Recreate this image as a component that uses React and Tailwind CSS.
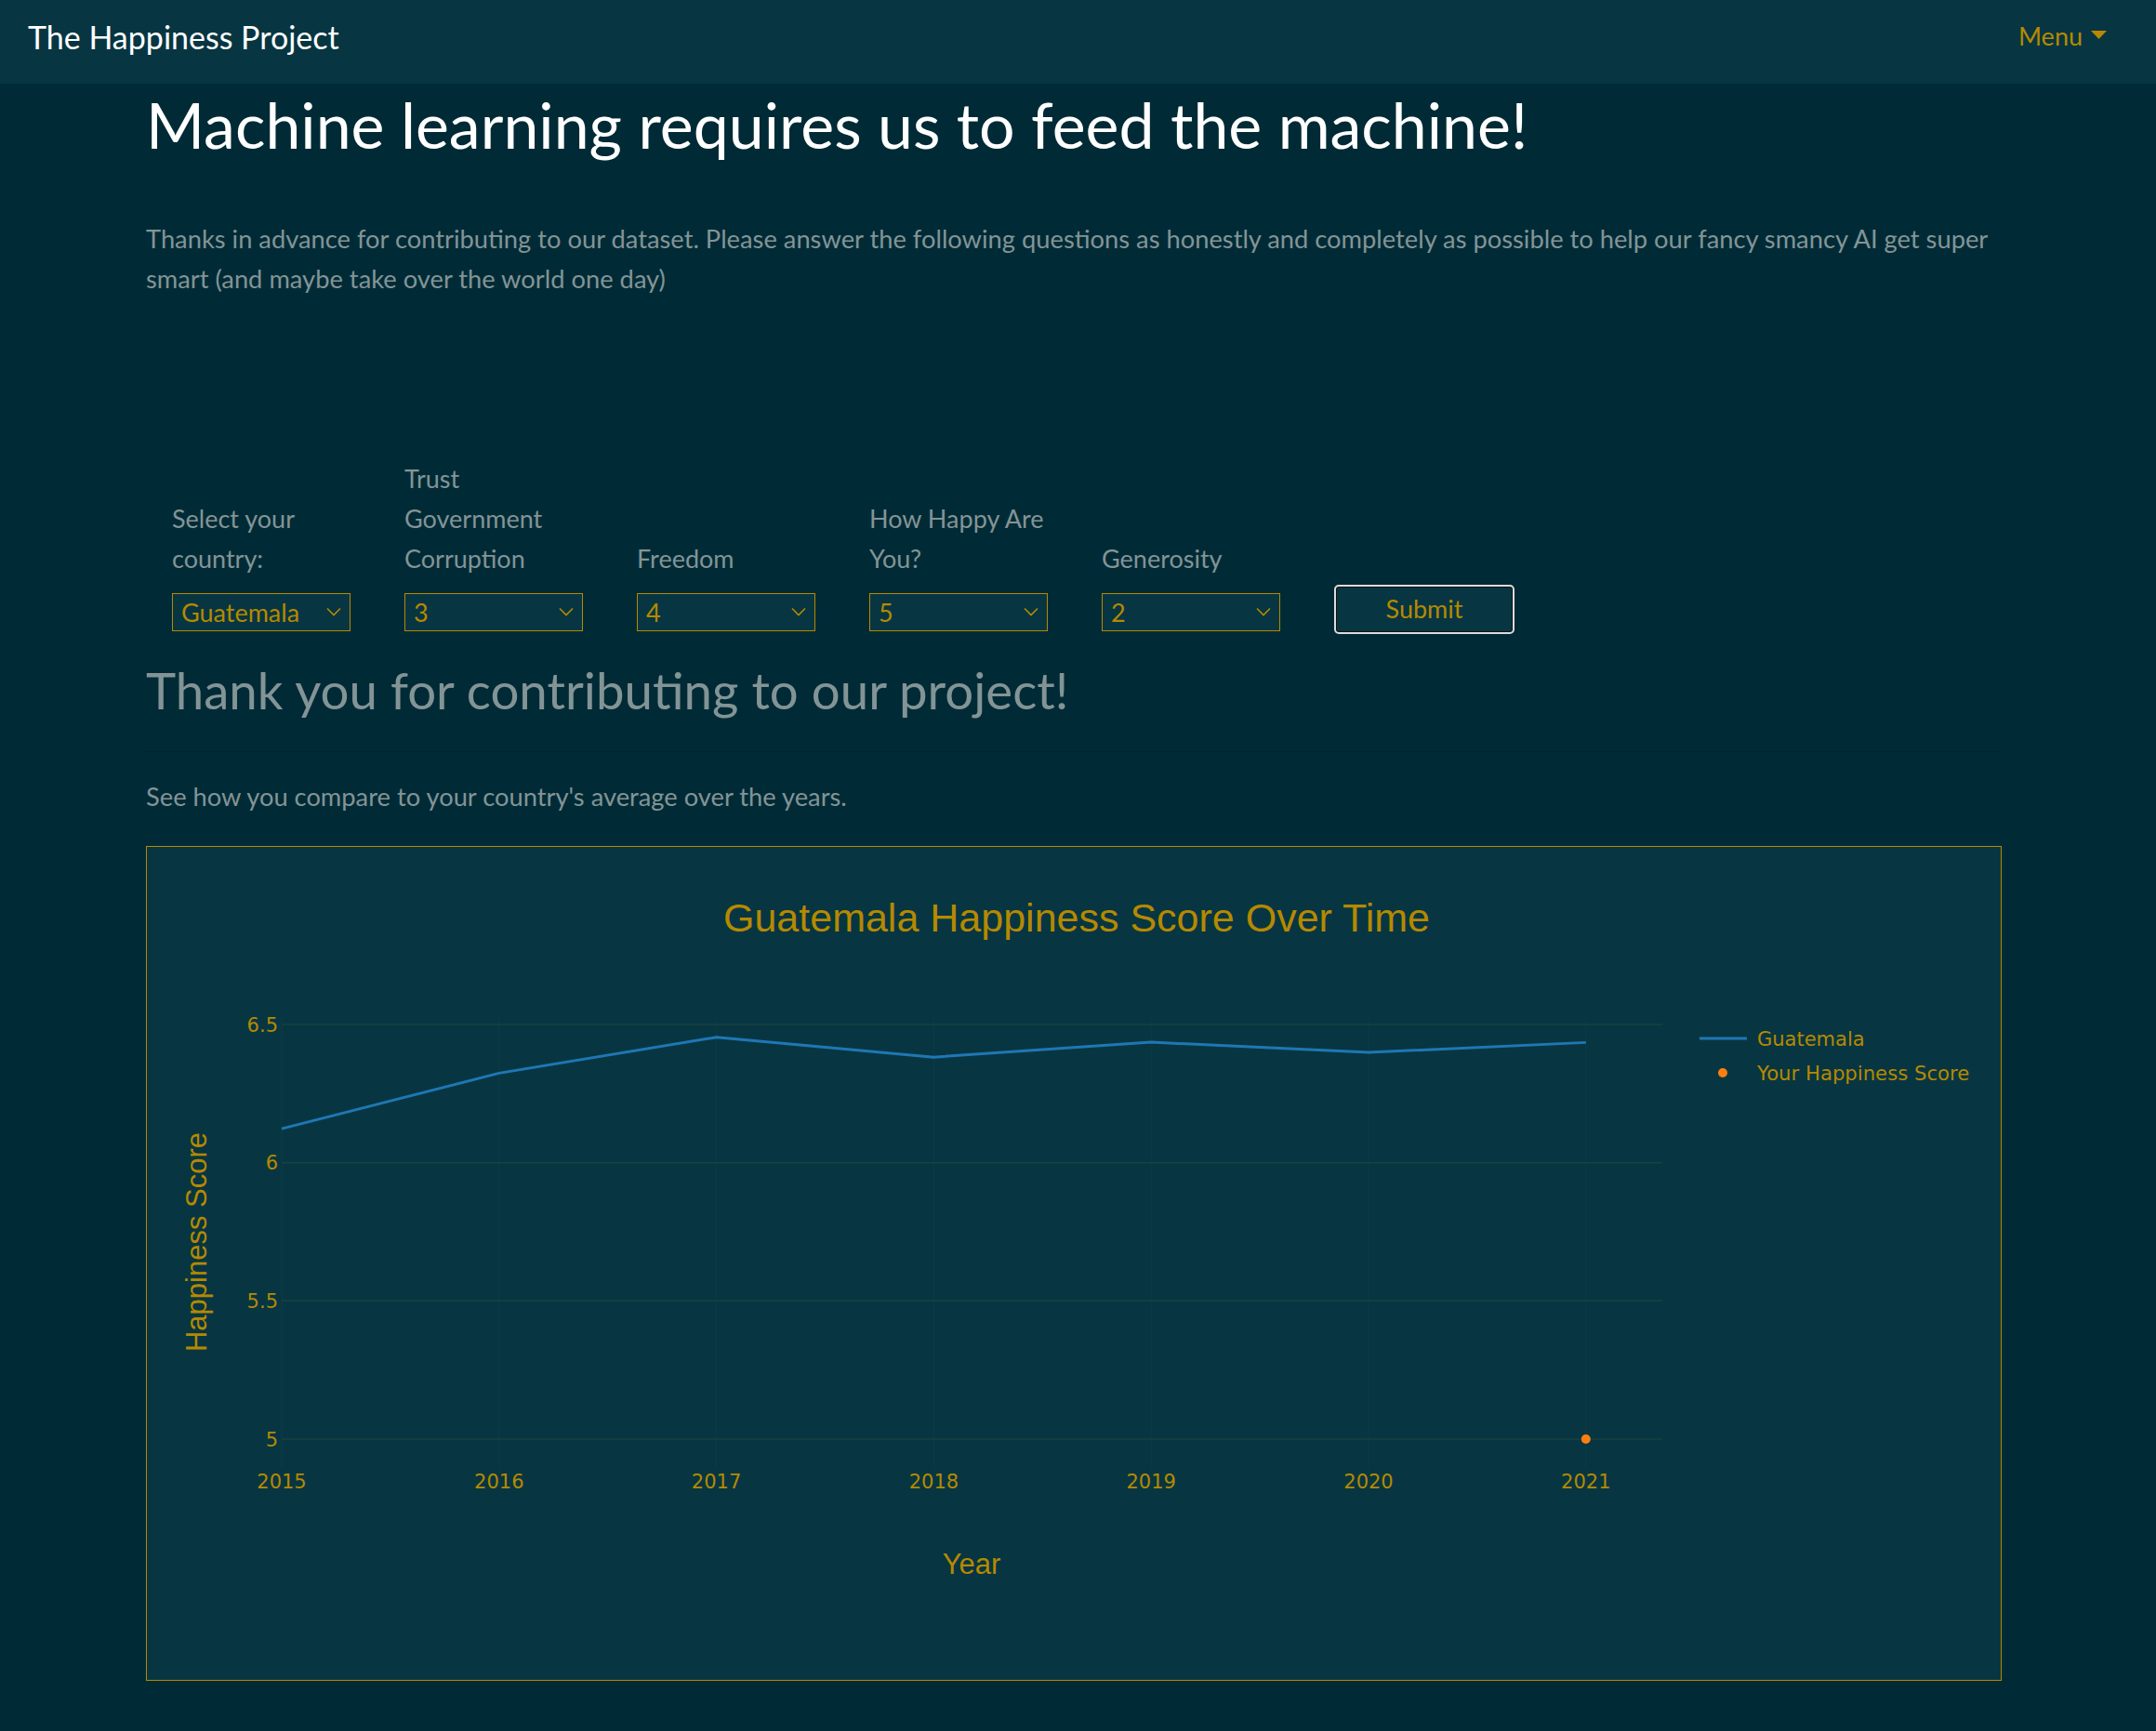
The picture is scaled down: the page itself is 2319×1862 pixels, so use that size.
import React from "react";

const years = [2015, 2016, 2017, 2018, 2019, 2020, 2021];
const scores = [6.123, 6.324, 6.454, 6.382, 6.436, 6.399, 6.435];

const X = (i) => 145 + i * 233.8;
const Y = (v) => 637 - (v - 5) * 297.3;

const Chevron = () => (
  <svg
    className="pointer-events-none absolute right-[10px] top-1/2 -translate-y-1/2"
    width="16"
    height="10"
    viewBox="0 0 16 10"
    fill="none"
  >
    <path d="M1 1.5 L8 8.5 L15 1.5" stroke="#b58900" strokeWidth="1.6" />
  </svg>
);

const Dropdown = ({ value, options }) => (
  <div className="relative h-[41px] w-[192px]">
    <select
      defaultValue={value}
      className="h-full w-full appearance-none border border-[#b58900] bg-[#073642] pl-[9px] text-[27px] leading-none text-[#b58900] outline-none"
    >
      {options.map((o) => (
        <option key={o} value={o}>
          {o}
        </option>
      ))}
    </select>
    <Chevron />
  </div>
);

const Field = ({ label, value, options }) => (
  <div className="flex w-[192px] flex-col justify-end">
    <label className="mb-[16px] text-[27px] leading-[43px] text-[#839496]">{label}</label>
    <Dropdown value={value} options={options} />
  </div>
);

const nums = ["1", "2", "3", "4", "5"];

const Chart = () => {
  const pts = scores.map((s, i) => `${X(i)},${Y(s)}`).join(" ");
  return (
    <svg width="1994" height="896" viewBox="0 0 1994 896" className="block">
      {years.map((y, i) => (
        <line key={y} x1={X(i)} x2={X(i)} y1="183" y2="668" stroke="#0c3c48" strokeWidth="1" />
      ))}
      {[6.5, 6, 5.5, 5].map((v) => (
        <line key={v} x1="145" x2="1630" y1={Y(v)} y2={Y(v)} stroke="#1a4140" strokeWidth="1.5" />
      ))}
      <polyline points={pts} fill="none" stroke="#1f77b4" strokeWidth="3" strokeLinejoin="round" />
      <circle cx={X(6)} cy={Y(5)} r="5" fill="#ff7f0e" />

      <g fontFamily="'DejaVu Sans', Verdana, sans-serif" fontSize="21" fill="#b58900">
        {[6.5, 6, 5.5, 5].map((v) => (
          <text key={v} x="141" y={Y(v) + 7.5} textAnchor="end">
            {v}
          </text>
        ))}
        {years.map((y, i) => (
          <text key={y} x={X(i)} y="690" textAnchor="middle">
            {y}
          </text>
        ))}
        <line x1="1670" x2="1721" y1="206" y2="206" stroke="#1f77b4" strokeWidth="3" />
        <text x="1732" y="214">Guatemala</text>
        <circle cx="1695" cy="243" r="5" fill="#ff7f0e" />
        <text x="1732" y="251" fontSize="21.2">
          Your Happiness Score
        </text>
      </g>

      <g fontFamily="'Liberation Sans', Arial, sans-serif" fill="#b58900">
        <text x="1000" y="91" fontSize="43" textAnchor="middle">
          Guatemala Happiness Score Over Time
        </text>
        <text x="887" y="782" fontSize="31" textAnchor="middle">
          Year
        </text>
        <text x="0" y="0" fontSize="31" textAnchor="middle" transform="translate(64 425) rotate(-90)">
          Happiness Score
        </text>
      </g>
    </svg>
  );
};

export default function App() {
  return (
    <div className="min-h-screen bg-[#002b36] pb-[55px] font-['Lato',sans-serif]">
      <nav className="flex h-[90px] items-center justify-between bg-[#073642] pb-[11px] pl-[30px] pr-[53px]">
        <span className="text-[34px] text-white">The Happiness Project</span>
        <button className="flex items-center gap-[9px] text-[27px] text-[#b58900]">
          Menu
          <svg width="17" height="9" viewBox="0 0 17 9" className="-mt-[4px]">
            <path d="M0 0 H17 L8.5 9 Z" fill="#b58900" />
          </svg>
        </button>
      </nav>

      <main className="ml-[157px] w-[1996px]">
        <h1 className="mt-[3px] text-[68px] leading-[1.2] text-white">
          Machine learning requires us to feed the machine!
        </h1>
        <p className="mt-[60px] text-[27.3px] leading-[43px] text-[#839496]">
          Thanks in advance for contributing to our dataset. Please answer the following questions as honestly and
          completely as possible to help our fancy smancy AI get super smart (and maybe take over the world one day)
        </p>

        <form className="mt-[172px] flex items-end gap-[58px] pl-[28px]" onSubmit={(e) => e.preventDefault()}>
          <Field
            label={
              <>
                Select your
                <br />
                country:
              </>
            }
            value="Guatemala"
            options={["Guatemala", "Honduras", "Mexico"]}
          />
          <Field
            label={
              <>
                Trust
                <br />
                Government
                <br />
                Corruption
              </>
            }
            value="3"
            options={nums}
          />
          <Field label="Freedom" value="4" options={nums} />
          <Field
            label={
              <>
                How Happy Are
                <br />
                You?
              </>
            }
            value="5"
            options={nums}
          />
          <Field label="Generosity" value="2" options={nums} />
          <button
            type="submit"
            className="mb-[-3px] h-[53px] w-[194px] rounded-[5px] border-2 border-[#dcdcdc] bg-[#073642] text-[27px] text-[#b58900] shadow-[inset_0_0_0_1px_#111]"
          >
            Submit
          </button>
        </form>

        <h2 className="mt-[31px] text-[54.6px] leading-[1.2] text-[#839496]">Thank you for contributing to our project!</h2>
        <hr className="mt-[33px] border-t border-[#00222b]" />
        <p className="mt-[26px] text-[27.3px] leading-[43px] text-[#839496]">
          See how you compare to your country's average over the years.
        </p>

        <div className="mt-[32px] border border-[#b58900] bg-[#073642]">
          <Chart />
        </div>
      </main>
    </div>
  );
}
